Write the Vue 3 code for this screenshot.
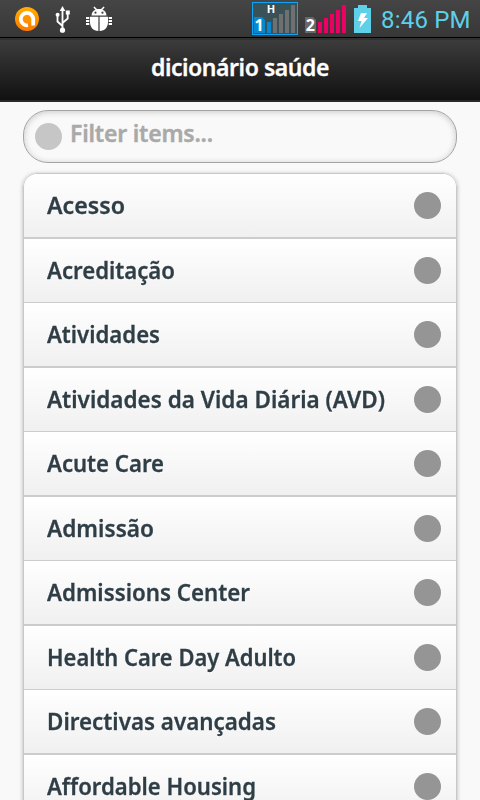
<script setup>
import { ref, computed } from 'vue';

const filter = ref('');

// width each label takes up in its row
const items = [
  { name: 'Acesso', width: 78 },
  { name: 'Acreditação', width: 128 },
  { name: 'Atividades', width: 113 },
  { name: 'Atividades da Vida Diária (AVD)', width: 338 },
  { name: 'Acute Care', width: 117 },
  { name: 'Admissão', width: 107 },
  { name: 'Admissions Center', width: 203 },
  { name: 'Health Care Day Adulto', width: 249 },
  { name: 'Directivas avançadas', width: 229 },
  { name: 'Affordable Housing', width: 209 },
];

const visible = computed(() =>
  items.filter((item) => item.name.toLowerCase().includes(filter.value.toLowerCase()))
);
</script>

<template>
  <div class="screen">
    <div class="status">
      <svg class="status__icons" width="130" height="37" viewBox="0 0 130 37">
        <defs>
          <linearGradient id="orange" x1="0" y1="0" x2="0" y2="1">
            <stop offset="0" stop-color="#ffb000" />
            <stop offset="1" stop-color="#ff7800" />
          </linearGradient>
        </defs>
        <circle cx="27" cy="19" r="12" fill="url(#orange)" />
        <path d="M28 25.2A6.2 6.2 0 1 1 33.2 19V25.5" fill="none" stroke="#fff" stroke-width="3.8" />
        <path d="M30 19A3 3 0 1 0 27 22.2H30Z" fill="#ff9200" />
        <g fill="none" stroke="#fff" stroke-width="1.8">
          <path d="M62.5 9V30M62.5 26L57.5 21.5V15M62.5 23L67.7 18.5V13" />
        </g>
        <g fill="#fff">
          <path d="M62.5 6L65.3 11H59.7Z" />
          <circle cx="62.5" cy="30.2" r="2.6" />
          <circle cx="57.6" cy="14.7" r="2" />
          <rect x="65.8" y="10.5" width="4" height="4" />
          <path d="M91.5 15.5C91.5 12.5 93.5 10.7 95.5 9.8L93.4 7.4L94.4 6.6L97 9.1H101L103.6 6.6L104.6 7.4L102.5 9.8C104.5 10.7 106.5 12.5 106.5 15.5Z" />
          <path d="M90 16.7H98.4V31C93 31 90 27 90 22Z" />
          <path d="M99.6 16.7H108V22C108 27 105 31 99.6 31Z" />
          <path d="M86 17H89.3V19H86ZM86 20H89.3V22H86ZM86 23H89.3V25H86ZM108.7 17H112V19H108.7ZM108.7 20H112V22H108.7ZM108.7 23H112V25H108.7Z" />
        </g>
        <circle cx="95.5" cy="12.7" r="1.1" fill="#444" />
        <circle cx="102.5" cy="12.7" r="1.1" fill="#444" />
      </svg>

      <svg class="status__signal" width="124" height="37" viewBox="250 0 124 37">
        <rect x="252.5" y="2.5" width="45" height="32" fill="#395258" stroke="#10a2f5" />
        <path d="M254 17H262L265 20V33H254Z" fill="#0788d1" />
        <path d="M267 22H271V33H267Z" fill="#0788d1" />
        <path d="M273 18H277V33H273ZM279 14H283V33H279ZM285 10H289V33H285ZM291 5H295V33H291Z" fill="#707070" />
        <text x="259.2" y="30.5" class="sim">1</text>
        <text x="271" y="13" class="net">H</text>
        <path d="M305 17H313L316 20V33H305Z" fill="#686868" />
        <text x="310.3" y="30.5" class="sim">2</text>
        <path d="M318 22H322V33H318ZM324 18H328V33H324ZM330 14H334V33H330ZM336 10H340V33H336ZM342 5H346V33H342Z" fill="#ed0063" />
        <path d="M358 5H367V8H371V33H354V8H358Z" fill="#5ed0e8" />
        <path d="M361 13H367L364 18H368L359.5 28L361.5 21H358Z" fill="#fff" />
      </svg>
      <span class="status__time">8:46 PM</span>
    </div>

    <header class="header">
      <h1 class="header__title">dicionário saúde</h1>
    </header>

    <main class="content">
      <label class="search">
        <span class="search__icon"></span>
        <input v-model="filter" class="search__input" placeholder="Filter items..." />
      </label>

      <ul class="list">
        <li v-for="item in visible" :key="item.name" class="item">
          <svg class="item__label" width="350" height="36">
            <text x="0" y="26" :textLength="item.width" lengthAdjust="spacingAndGlyphs">{{ item.name }}</text>
          </svg>
          <span class="item__icon"></span>
        </li>
      </ul>
    </main>
  </div>
</template>

<style>
body {
  margin: 0;
  overflow: hidden;
}
</style>

<style scoped>
.screen {
  display: flex;
  flex-direction: column;
  width: 480px;
  height: 800px;
  overflow: hidden;
  background: #f9f9f9;
  font-family: "Noto Sans", "Open Sans", sans-serif;
}

.status {
  display: flex;
  flex: none;
  height: 37px;
  border-bottom: 1px solid #000;
  background: linear-gradient(#454545, #373737);
}

.status__signal {
  margin-left: 120px;
}

.status__time {
  margin-left: 7px;
  color: #5ed0e8;
  font-family: Roboto, sans-serif;
  font-size: 24px;
  line-height: 40px;
  letter-spacing: 0.2px;
  white-space: nowrap;
}

.sim {
  fill: #fff;
  font-size: 16px;
  font-weight: 700;
  text-anchor: middle;
}

.net {
  fill: #fff;
  font-size: 11px;
  font-weight: 700;
  text-anchor: middle;
}

.header {
  box-sizing: border-box;
  flex: none;
  height: 64px;
  border-top: 2px solid #303030;
  border-bottom: 2px solid #2c292b;
  background: linear-gradient(#3c3c3c, #111);
}

.header__title {
  margin: 0;
  color: #fff;
  font-size: 23px;
  font-weight: 600;
  line-height: 54px;
  letter-spacing: -0.45px;
  text-align: center;
  -webkit-text-stroke: 0.3px #fff;
}

.content {
  padding: 8px 23px 0;
}

.search {
  display: flex;
  align-items: center;
  box-sizing: border-box;
  height: 53px;
  padding: 0 11px;
  border: 1px solid #a4a4a4;
  border-radius: 25px;
  background: #f9f9f9;
  box-shadow: inset 0 1px 6px rgba(0, 0, 0, 0.2);
}

.search__icon {
  flex: none;
  width: 27px;
  height: 27px;
  border-radius: 50%;
  background: #c6c6c6;
}

.search__input {
  flex: 1;
  min-width: 0;
  height: 40px;
  margin: -7px 0 0 8px;
  padding: 0;
  border: none;
  outline: none;
  background: none;
  color: #333;
  font: 600 23px "Noto Sans", sans-serif;
  letter-spacing: -0.2px;
}

.search__input::placeholder {
  color: #a9a9a9;
  opacity: 1;
  -webkit-text-stroke: 0.4px #a9a9a9;
}

.list {
  margin: 10px 0 0;
  padding: 0;
  overflow: hidden;
  border: 1px solid #c8c8c8;
  border-radius: 14px 14px 0 0;
  box-shadow: 0 1px 4px rgba(0, 0, 0, 0.3);
  list-style: none;
}

.item {
  display: flex;
  align-items: center;
  justify-content: space-between;
  height: 63px;
  padding: 0 15px 0 22.5px;
  border-bottom: 2px solid #ccc;
  background: linear-gradient(#fff, #f0f0f0);
}

.item:nth-child(even) {
  border-bottom-width: 1px;
}

.item__label {
  fill: #2f3e46;
  stroke: #2f3e46;
  stroke-width: 0.3px;
  font-size: 23px;
  font-weight: 600;
  filter: drop-shadow(0 1px 0 #fff);
}

.item__icon {
  width: 27px;
  height: 27px;
  border-radius: 50%;
  background: #959595;
}
</style>
